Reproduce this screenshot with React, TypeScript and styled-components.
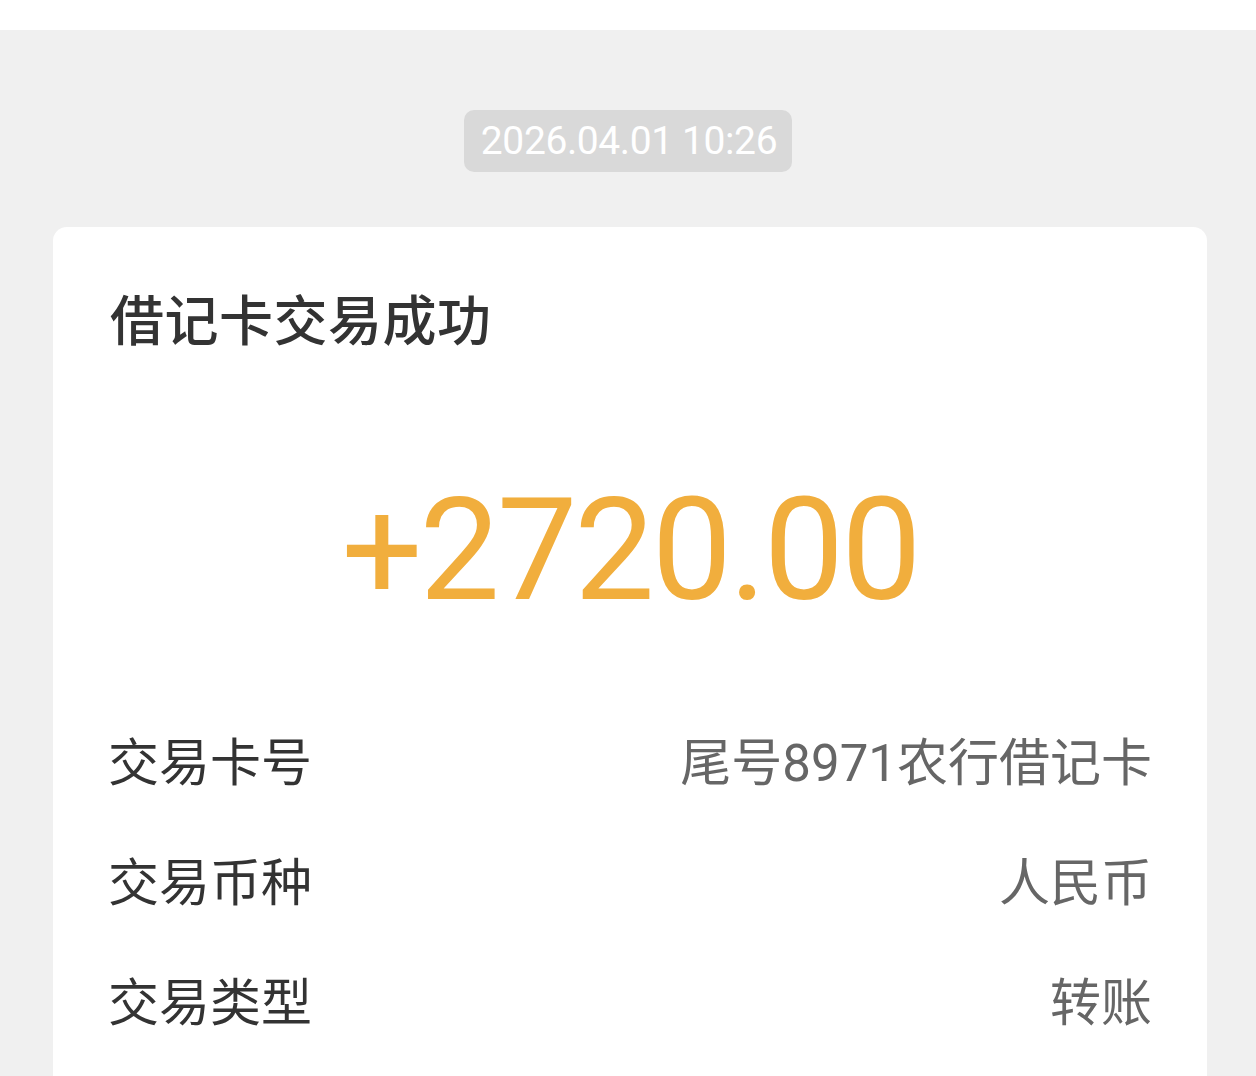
import styled, { createGlobalStyle } from "styled-components"

const GlobalStyle = createGlobalStyle`
  html, body {
    margin: 0;
    padding: 0;
    background: #f0f0f0;
    font-family: Roboto, "Noto Sans CJK SC", sans-serif;
    overflow: hidden;
  }
`

const rows = [
  { label: "交易卡号", value: "尾号8971农行借记卡" },
  { label: "交易币种", value: "人民币" },
  { label: "交易类型", value: "转账" },
]

const App = () => {
  return (
    <Page>
      <GlobalStyle />
      <TopBar />
      <TimeWrap>
        <TimePill>2026.04.01 10:26</TimePill>
      </TimeWrap>
      <Card>
        <Title>借记卡交易成功</Title>
        <Amount>+2720.00</Amount>
        <Rows>
          {rows.map((r) => (
            <Row key={r.label}>
              <Label>{r.label}</Label>
              <Value>{r.value}</Value>
            </Row>
          ))}
        </Rows>
      </Card>
    </Page>
  )
}
export default App

const Page = styled.div`
  width: 1256px;
  height: 1076px;
  overflow: hidden;
  display: flex;
  flex-direction: column;
`

const TopBar = styled.div`
  height: 30px;
  flex-shrink: 0;
  background: #ffffff;
`

const TimeWrap = styled.div`
  display: flex;
  justify-content: center;
  padding-top: 80px;
`

const TimePill = styled.div`
  height: 62px;
  padding: 0 15px 0 17px;
  display: flex;
  align-items: center;
  background: #d9d9d9;
  border-radius: 10px;
  color: #ffffff;
  font-family: Roboto, sans-serif;
  font-size: 39px;
  letter-spacing: -0.4px;
`

const Card = styled.div`
  flex-shrink: 0;
  margin: 55px 49px 0 53px;
  background: #ffffff;
  border-radius: 14px;
  padding: 51px 55px 40px 55px;
  display: flex;
  flex-direction: column;
`

const Title = styled.div`
  padding-left: 2px;
  font-family: "Noto Sans CJK SC", sans-serif;
  font-size: 54px;
  font-weight: 500;
  line-height: 80px;
  color: #333333;
  letter-spacing: 0.5px;
`

const Amount = styled.div`
  margin-top: 112px;
  text-align: center;
  font-family: Roboto, sans-serif;
  font-size: 143px;
  font-weight: 400;
  line-height: 160px;
  color: #f1ae3d;
  letter-spacing: -3px;
`

const Rows = styled.div`
  margin-top: 69px;
  display: flex;
  flex-direction: column;
`

const Row = styled.div`
  height: 120px;
  display: flex;
  align-items: center;
  justify-content: space-between;
  font-family: Roboto, "Noto Sans CJK SC", sans-serif;
  font-size: 51px;
`

const Label = styled.div`
  color: #333333;
`

const Value = styled.div`
  color: #666666;
`
